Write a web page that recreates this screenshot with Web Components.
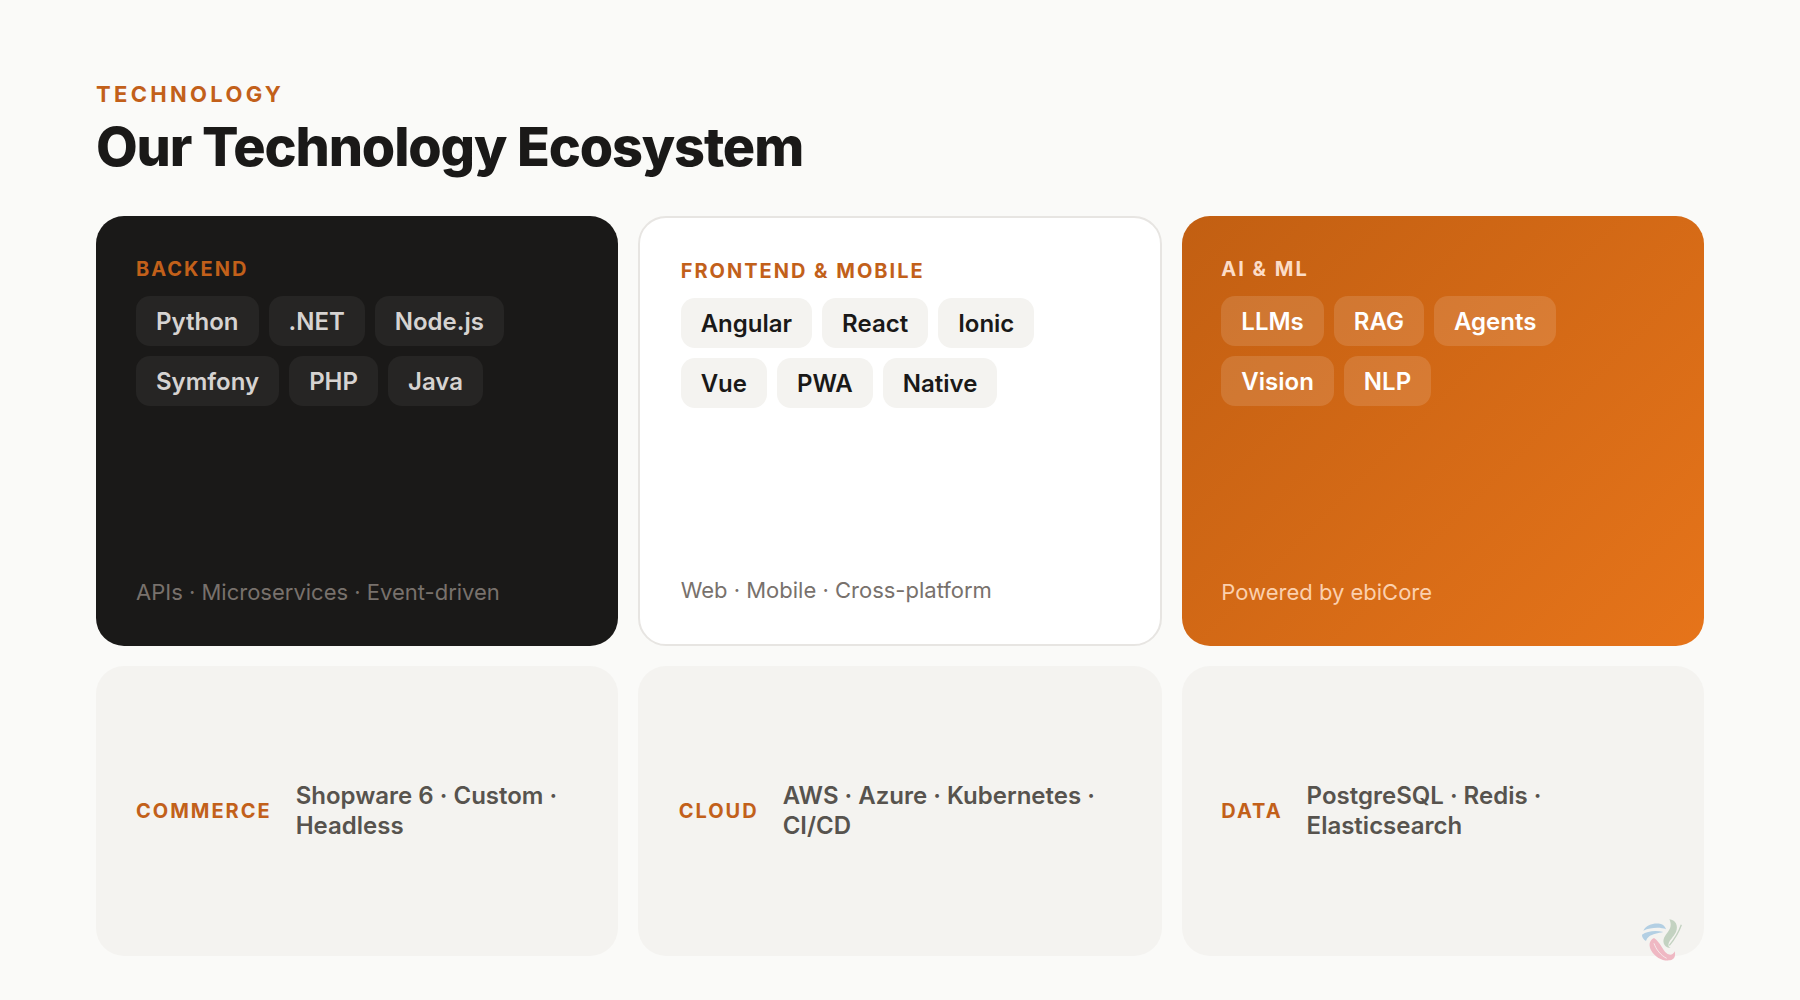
<!DOCTYPE html>
<html><head><meta charset="utf-8">
<style>
html,body{margin:0;padding:0;background:#fafaf8;}
body{width:1800px;height:1000px;overflow:hidden;font-family:Inter,"Liberation Sans",sans-serif;}
</style></head><body>
<eco-slide>
  <eco-header slot="header" eyebrow="TECHNOLOGY" title="Our Technology Ecosystem"></eco-header>
  <eco-card col="1" variant="dark" label="BACKEND" foot="APIs · Microservices · Event-driven">
    <eco-chip>Python</eco-chip><eco-chip>.NET</eco-chip><eco-chip>Node.js</eco-chip><eco-chip>Symfony</eco-chip><eco-chip>PHP</eco-chip><eco-chip>Java</eco-chip>
  </eco-card>
  <eco-card col="2" variant="light" label="FRONTEND &amp; MOBILE" foot="Web · Mobile · Cross-platform">
    <eco-chip>Angular</eco-chip><eco-chip>React</eco-chip><eco-chip>Ionic</eco-chip><eco-chip>Vue</eco-chip><eco-chip>PWA</eco-chip><eco-chip>Native</eco-chip>
  </eco-card>
  <eco-card col="3" variant="accent" label="AI &amp; ML" foot="Powered by ebiCore">
    <eco-chip>LLMs</eco-chip><eco-chip>RAG</eco-chip><eco-chip>Agents</eco-chip><eco-chip>Vision</eco-chip><eco-chip>NLP</eco-chip>
  </eco-card>
  <eco-strip col="1" label="COMMERCE">Shopware 6 · Custom · Headless</eco-strip>
  <eco-strip col="2" label="CLOUD">AWS · Azure · Kubernetes · CI/CD</eco-strip>
  <eco-strip col="3" label="DATA">PostgreSQL · Redis · Elasticsearch</eco-strip>
  <eco-logo slot="logo"></eco-logo>
</eco-slide>
<script>
function def(name, css, html){
  customElements.define(name, class extends HTMLElement{
    constructor(){super();this.attachShadow({mode:'open'});}
    connectedCallback(){
      this.shadowRoot.innerHTML='<style>'+css+'</style>'+(typeof html==='function'?html(this):html);
    }
  });
}
const esc=s=>(s||'').replace(/&/g,'&amp;').replace(/</g,'&lt;');
def('eco-slide',`
  :host{display:block;position:relative;width:1800px;height:1000px;box-sizing:border-box;padding:80px 96px 44px;background:#fafaf8;}
  .grid{display:grid;grid-template-columns:522px 524px 522px;grid-template-rows:430px 290px;gap:20px;}
`,`<slot name="header"></slot><div class="grid"><slot></slot></div><slot name="logo"></slot>`);
def('eco-header',`
  :host{display:block;height:136px;}
  .e{font-size:22px;line-height:28px;font-weight:700;letter-spacing:.15em;color:#c2601a;}
  h1{margin:7px 0 0;font-size:54px;line-height:64px;font-weight:800;letter-spacing:-.021em;color:#1a1918;}
`,h=>`<div class="e">${esc(h.getAttribute('eyebrow'))}</div><h1>${esc(h.getAttribute('title'))}</h1>`);
def('eco-card',`
  :host{display:flex;flex-direction:column;box-sizing:border-box;border-radius:28px;padding:40px;min-width:0;}
  :host([col="2"]){padding-left:40.67px;}
  :host([col="3"]){padding-left:39.33px;}
  :host([variant=dark]){background:#1a1918;}
  :host([variant=light]){background:#fff;border:2px solid #e7e5e2;}
  :host([variant=accent]){background:linear-gradient(135deg,#c25f12,#e6741a);}
  .l{font-size:20px;line-height:26px;font-weight:700;letter-spacing:.1em;color:#c2601a;}
  :host([variant=accent]) .l{color:#fcdcc7;}
  .chips{display:flex;flex-wrap:wrap;gap:10px;margin-top:14px;
    --chip-bg:#f4f3f0;--chip-fg:#1a1918;}
  :host([variant=dark]) .chips{--chip-bg:#262524;--chip-fg:#d6d3d1;}
  :host([variant=accent]) .chips{--chip-bg:rgba(255,255,255,.13);--chip-fg:#fff;}
  .f{margin-top:auto;font-size:22px;line-height:28px;color:#78716c;}
  :host([variant=accent]) .f{color:#fbd0ae;}
`,h=>`<div class="l">${esc(h.getAttribute('label'))}</div><div class="chips"><slot></slot></div><div class="f">${esc(h.getAttribute('foot'))}</div>`);
def('eco-chip',`
  :host{display:block;box-sizing:border-box;height:50px;padding:0 20px;border-radius:14px;background:var(--chip-bg);color:var(--chip-fg);font-size:24px;line-height:52px;font-weight:600;white-space:nowrap;}
`,`<slot></slot>`);
def('eco-strip',`
  :host{display:flex;align-items:center;gap:24px;box-sizing:border-box;background:#f4f3f0;border-radius:28px;padding:40px;min-width:0;}
  :host([col="2"]){padding-left:40.67px;}
  :host([col="3"]){padding-left:39.33px;}
  .l{flex:none;font-size:20px;font-weight:700;letter-spacing:.1em;color:#c2601a;}
  .v{font-size:24px;line-height:30px;font-weight:600;color:#57534e;}
`,h=>`<div class="l">${esc(h.getAttribute('label'))}</div><div class="v"><slot></slot></div>`);
def('eco-logo',`
  :host{display:block;position:absolute;left:1630px;top:910px;width:60px;height:55px;}
  svg{display:block;}
`,`<svg width="60" height="55" viewBox="0 0 180 165" fill="none">
  <path d="M40 62C48 44 72 38 90 41C100 43 106 50 108 58C92 51 62 52 40 62Z" fill="#b3cfe3"/>
  <path d="M36 74C52 62 80 60 100 66C85 69 66 73 58 79C52 84 50 88 48 93C40 88 35 80 36 74Z" fill="#b3cfe3"/>
  <path d="M118 28C136 30 146 46 138 66C130 82 120 88 116 100C114 108 116 112 122 114C106 114 96 100 102 84C108 70 122 60 122 44C122 38 120 32 118 28Z" fill="#c3d2c1"/>
  <path d="M154 44C148 62 136 84 118 106" stroke="#c3d2c1" stroke-width="4"/>
  <path d="M72 84C56 92 56 108 64 122C76 142 98 154 120 151C132 149 138 140 134 124C130 134 120 138 110 130C98 120 92 98 72 84Z" fill="#efb8c3"/>
  <path d="M72 100C78 118 92 136 110 145" stroke="#f6f1f0" stroke-width="2.5"/>
</svg>`);
</script>
</body></html>
